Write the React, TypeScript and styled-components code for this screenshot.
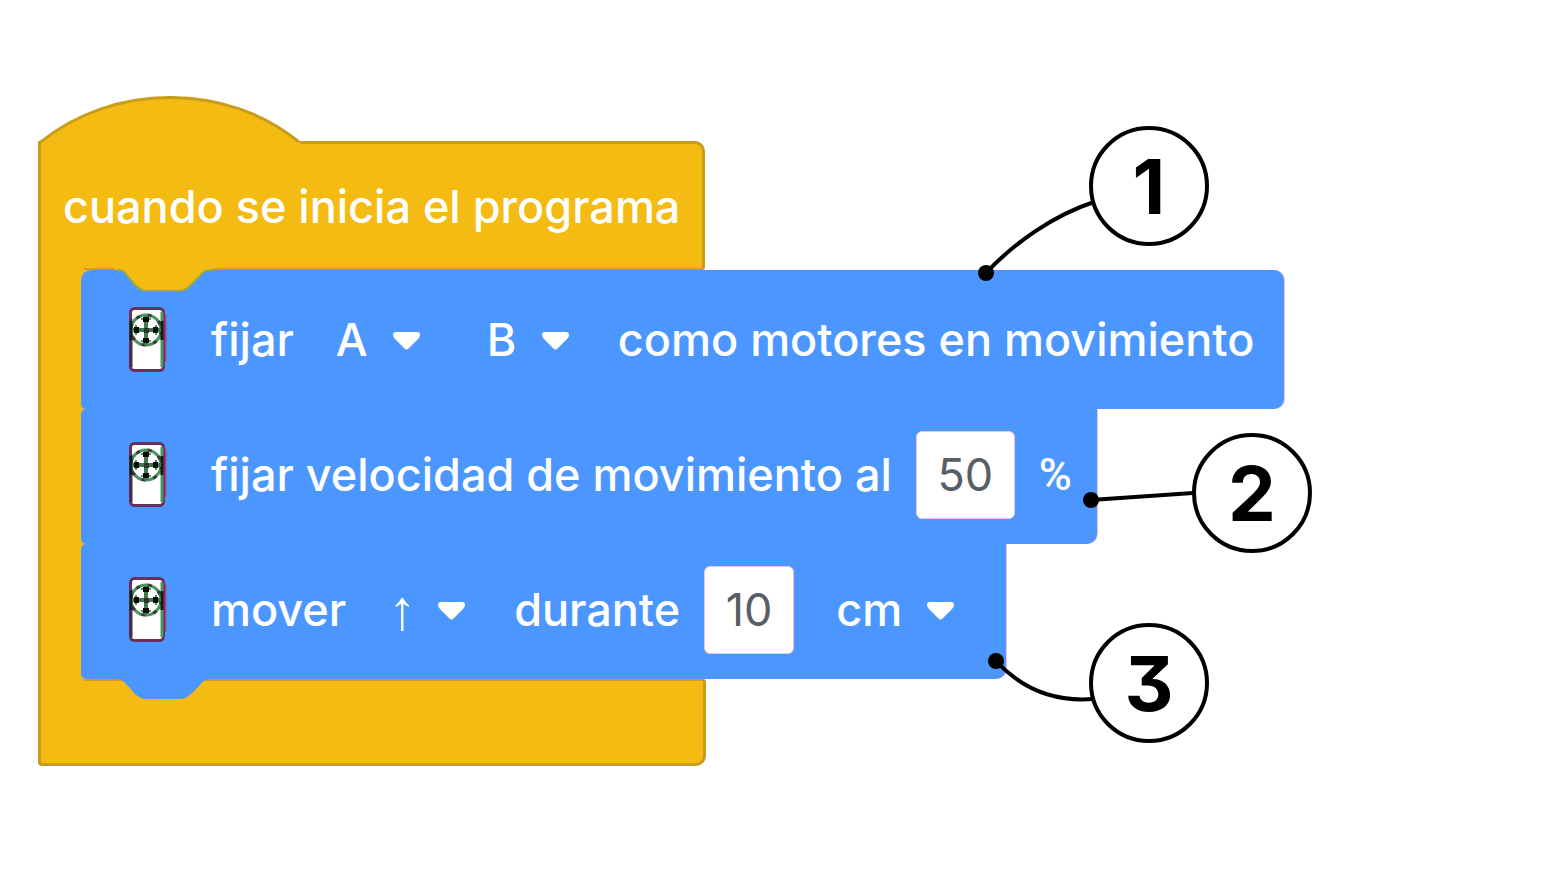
import React from "react";
import styled, { createGlobalStyle } from "styled-components";

const yellow = "#f4bb12";
const yellowEdge = "#c99d1b";
const yellowInner = "#d9981f";
const blue = "#4c97ff";
const pink = "#efc3e0";

const GlobalStyle = createGlobalStyle`
  * { box-sizing: border-box; }
  body {
    margin: 0;
    background: #fff;
    font-family: Inter, "Liberation Sans", sans-serif;
  }
`;

const Canvas = styled.main`
  padding: 96px 38px;
`;

const Script = styled.section`
  display: flex;
  flex-direction: column;
  align-items: flex-start;
`;

const Cap = styled.svg`
  display: block;
  position: relative;
  margin-bottom: -4px;
`;

const Head = styled.h1`
  margin: 0;
  height: 129px;
  padding: 0 22px;
  display: flex;
  align-items: center;
  background: linear-gradient(${yellowInner}, ${yellowInner}) no-repeat 43px 100% / 100% 2px, ${yellow};
  border: 3px solid ${yellowEdge};
  border-bottom: 0;
  border-radius: 0 10px 3px 0;
  color: #fff;
  font-size: 45px;
  line-height: 56px;
  font-weight: 500;
  white-space: nowrap;
`;

const Mouth = styled.div`
  display: flex;
  flex-direction: column;
  align-items: flex-start;
  padding-left: 43px;
  background: linear-gradient(to right, ${yellowEdge} 3px, ${yellow} 3px) no-repeat 0 0 / 60px 100%;
`;

const Foot = styled.div`
  width: 668px;
  height: 87px;
  background: linear-gradient(${yellowInner}, ${yellowInner}) no-repeat 43px 0 / 100% 2px, ${yellow};
  border: 3px solid ${yellowEdge};
  border-top: 0;
  border-radius: 0 3px 10px 4px;
`;

const Block = styled.div<{ $width: number; $first?: boolean }>`
  position: relative;
  display: flex;
  align-items: center;
  gap: 24px;
  width: ${(p) => p.$width}px;
  height: ${(p) => (p.$first ? 139 : 135)}px;
  padding: 0 24px ${(p) => (p.$first ? 0 : 4)}px;
  background: ${blue};
  border-radius: ${(p) => (p.$first ? "10px 10px" : "5px 0")} 10px 5px;
  box-shadow: 1px 0 0 ${pink};
  color: #fff;
  font-size: 45px;
  line-height: 56px;
  font-weight: 500;
  white-space: nowrap;
`;

const Notch = styled.svg`
  position: absolute;
  left: 34px;
  top: -2px;
`;

const Bump = styled.svg`
  position: absolute;
  left: 34px;
  top: 100%;
  margin-top: -1px;
`;

const RobotIcon = styled.svg`
  flex: none;
  margin: 0 20px 0 24px;
`;

const Picker = styled.label`
  position: relative;
  display: flex;
  align-items: center;
  margin: 0 25px 0 18px;
`;

const Select = styled.select<{ $arrow?: boolean }>`
  appearance: none;
  border: 0;
  margin: 0;
  padding: 0 52px 0 0;
  background: transparent;
  color: inherit;
  font: inherit;
  ${(p) =>
    p.$arrow &&
    `
    padding-right: 49px;
    font-family: "Liberation Sans", sans-serif;
    font-size: 56px;
    font-weight: 700;
  `}
  outline: none;
`;

const Caret = styled.svg`
  position: absolute;
  right: 0;
  top: 50%;
  margin-top: -8px;
  pointer-events: none;
`;

const NumberInput = styled.input<{ $wide?: boolean }>`
  width: ${(p) => (p.$wide ? 99 : 90)}px;
  height: 88px;
  border: 1px solid ${pink};
  border-radius: 6px;
  padding: 0;
  background: #fff;
  color: #575e65;
  font: inherit;
  font-weight: 400;
  text-align: center;
  outline: none;
`;

const Percent = styled.span`
  font-family: Roboto, "Liberation Sans", sans-serif;
`;

const Leader = styled.svg<{ $left: number; $top: number }>`
  position: absolute;
  left: ${(p) => p.$left}px;
  top: ${(p) => p.$top}px;
  overflow: visible;
`;

const Badge = styled.span<{ $left: number; $top: number }>`
  position: absolute;
  left: ${(p) => p.$left}px;
  top: ${(p) => p.$top}px;
  width: 120px;
  height: 120px;
  display: flex;
  align-items: center;
  justify-content: center;
  border: 4px solid #000;
  border-radius: 50%;
  background: #fff;
  color: #000;
  font-size: 76px;
  line-height: 80px;
  font-weight: 700;
  font-feature-settings: "cv09";
`;

function Robot() {
  return (
    <RobotIcon width="38" height="65" viewBox="0 0 38 65" aria-hidden="true">
      <path d="M36 7v48" stroke="#b3408c" strokeWidth="3" />
      <rect x="1.500" y="1.500" width="33" height="62" rx="4" fill="#fff" stroke="#6b2f5c" strokeWidth="3" />
      <path d="M2 12v48" stroke="#4a2c48" strokeWidth="3" />
      <path d="M33 5v55" stroke="#4b9560" strokeWidth="3" />
      <circle cx="17" cy="23" r="15" fill="#fff" stroke="#4b9560" strokeWidth="3" />
      <circle cx="17" cy="23" r="15" fill="none" stroke="#3a3a40" strokeWidth="3" strokeDasharray="4 8" />
      <path d="M2 14v19M33 14v19" stroke="#1a1a1a" strokeWidth="3" />
      <path d="M17 9v29M3 23h29" stroke="#3f7a50" strokeWidth="4" />
      <path d="M12 12h10M12 34h10M7 18v10M27 18v10" stroke="#4b9560" strokeWidth="2" />
      <path d="M14 10h6v5h-6zM14 31h6v5h-6zM5 20h5v6h-5zM24 20h5v6h-5z" fill="#0b0b0b" />
      <rect x="15" y="21" width="5" height="5" fill="#333" />
    </RobotIcon>
  );
}

function Dropdown({ label, value, arrow }: { label: string; value: string; arrow?: boolean }) {
  return (
    <Picker>
      <Select aria-label={label} defaultValue={value} $arrow={arrow}>
        <option>{value}</option>
      </Select>
      <Caret width="27" height="18" viewBox="0 0 27 18" aria-hidden="true">
        <path d="M3 0h21q3 0 3 3q0 2-2 4l-9 9q-2.500 3-5 0l-9-9q-2-2-2-4q0-3 3-3z" fill="#fff" />
      </Caret>
    </Picker>
  );
}

export default function App() {
  return (
    <>
      <GlobalStyle />
      <Canvas>
        <Script>
          <Cap width="264" height="49" viewBox="0 0 264 49" aria-hidden="true">
            <path d="M0 49V47C74-13 188-14 262 46V49z" fill={yellow} />
            <path d="M1.500 49V47C74-13 188-14 261 46" fill="none" stroke={yellowEdge} strokeWidth="3" />
          </Cap>
          <Head>cuando se inicia el programa</Head>
          <Mouth>
            <Block $width={1203} $first>
              <Notch width="100" height="25" viewBox="0 0 100 25" aria-hidden="true">
                <path d="M0 0V2C8 2 9 5 14 10L19 16Q25 23 31 23H65Q71 23 77 16L84 9C88 4 90 2 98 2V0z" fill={yellow} />
                <path
                  d="M2 2C9 2 10 5 14 10L19 16Q25 23 31 23H65Q71 23 77 16L84 9C88 4 90 2 98 2"
                  fill="none"
                  stroke="#8aa850"
                  strokeWidth="2"
                />
              </Notch>
              <Robot />
              <span>fijar</span>
              <Dropdown label="Primer motor" value="A" />
              <Dropdown label="Segundo motor" value="B" />
              <span>como motores en movimiento</span>
              <Leader $left={897} $top={-70} width="116" height="82" viewBox="0 0 116 82" aria-hidden="true">
                <path d="M8 73C36 43 76 15 116 2" fill="none" stroke="#000" strokeWidth="4" />
                <circle cx="8" cy="73" r="8" />
              </Leader>
              <Badge $left={1008} $top={-144}>1</Badge>
            </Block>
            <Block $width={1016}>
              <Robot />
              <label htmlFor="speed">fijar velocidad de movimiento al</label>
              <NumberInput id="speed" $wide defaultValue="50" />
              <Percent>%</Percent>
              <Leader $left={1002} $top={82} width="110" height="18" viewBox="0 0 110 18" aria-hidden="true">
                <path d="M8 9L110 2" stroke="#000" strokeWidth="4" />
                <circle cx="8" cy="9" r="8" />
              </Leader>
              <Badge $left={1111} $top={24}>2</Badge>
            </Block>
            <Block $width={925}>
              <Bump width="100" height="22" viewBox="0 0 100 22" aria-hidden="true">
                <path
                  d="M0 0H98V1C90 1 88 3 84 8L77 15Q71 21 65 21H31Q25 21 19 15L14 9C9 4 8 1 0 1z"
                  fill={blue}
                />
              </Bump>
              <Robot />
              <span>mover</span>
              <Dropdown label="Dirección" value="↑" arrow />
              <label htmlFor="distance">durante</label>
              <NumberInput id="distance" defaultValue="10" />
              <Dropdown label="Unidad" value="cm" />
              <Leader $left={907} $top={109} width="105" height="50" viewBox="0 0 105 50" aria-hidden="true">
                <path d="M8 8C34 36 66 49 105 46" fill="none" stroke="#000" strokeWidth="4" />
                <circle cx="8" cy="8" r="8" />
              </Leader>
              <Badge $left={1008} $top={79}>3</Badge>
            </Block>
          </Mouth>
          <Foot />
        </Script>
      </Canvas>
    </>
  );
}
